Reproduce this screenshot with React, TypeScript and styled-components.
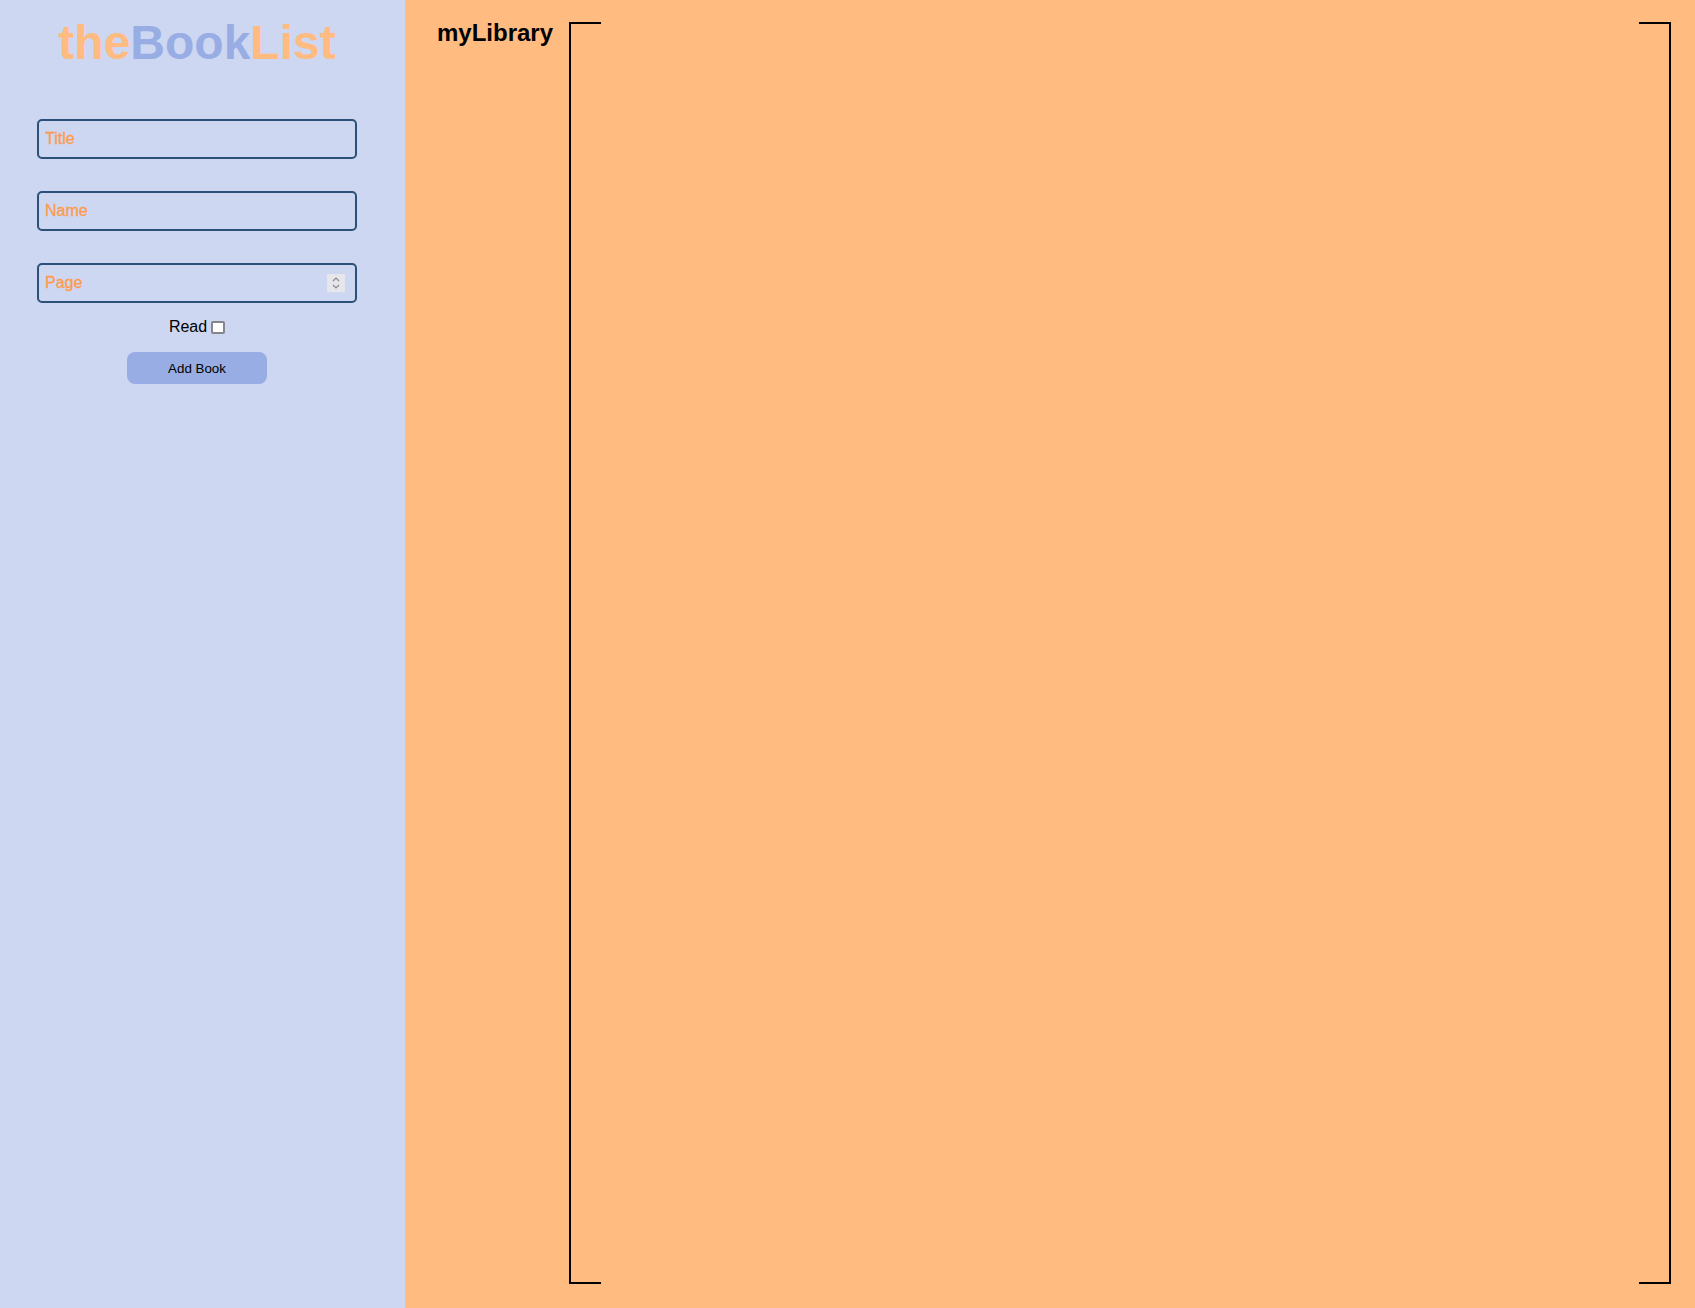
import React from "react";
import styled, { createGlobalStyle } from "styled-components";

const GlobalStyle = createGlobalStyle`
  html, body {
    margin: 0;
    padding: 0;
  }
  body {
    font-family: "Liberation Sans", Arial, Helvetica, sans-serif;
    background: #ffbb80;
  }
  * { box-sizing: border-box; }
`;

const Page = styled.div`
  display: flex;
  min-height: 100vh;
  height: 1308px;
`;

const Sidebar = styled.aside`
  width: 405px;
  flex: 0 0 405px;
  background: #cdd7f1;
  padding-right: 11px;
  display: flex;
  flex-direction: column;
  align-items: center;
`;

const Logo = styled.h1`
  margin: 15px 0 0;
  font-size: 48px;
  line-height: 55px;
  font-weight: 700;
  text-align: center;
`;

const LogoPart = styled.span<{ $tone: "orange" | "blue" }>`
  color: ${(p) => (p.$tone === "orange" ? "#ffbb80" : "#97ade3")};
`;

const Form = styled.form`
  margin-top: 49px;
  display: flex;
  flex-direction: column;
  align-items: center;
  gap: 32px;
`;

const Field = styled.div`
  position: relative;
  width: 320px;
  height: 40px;
`;

const Input = styled.input`
  width: 100%;
  height: 100%;
  border: 2px solid #2d5078;
  border-radius: 5px;
  background: transparent;
  padding: 0 6px;
  font-family: "Liberation Sans", Arial, sans-serif;
  font-size: 16px;
  color: #222;
  outline: none;
  -moz-appearance: textfield;
  &::placeholder {
    color: #fe9a4b;
    opacity: 1;
    -webkit-text-stroke: 0.3px #fe9a4b;
  }
  &::-webkit-inner-spin-button,
  &::-webkit-outer-spin-button {
    -webkit-appearance: none;
    margin: 0;
  }
`;

const Spinner = styled.span`
  position: absolute;
  right: 12px;
  top: 11px;
  width: 18px;
  height: 18px;
  background: #e7e7eb;
  display: flex;
  align-items: center;
  justify-content: center;
  pointer-events: none;
`;

const ReadRow = styled.label`
  margin-top: -17px;
  display: flex;
  align-items: center;
  gap: 4px;
  font-size: 16px;
  line-height: 18px;
  color: #000;
`;

const Check = styled.input`
  appearance: none;
  -webkit-appearance: none;
  width: 14px;
  height: 13px;
  margin: 1px 0 0;
  border: 2px solid #85858c;
  border-radius: 2px;
  background: #fff;
`;

const AddButton = styled.button`
  margin-top: -16px;
  width: 140px;
  height: 32px;
  border: none;
  border-radius: 8px;
  background: #97ade3;
  color: #000;
  font-family: "Liberation Sans", Arial, sans-serif;
  font-size: 13.33px;
  cursor: pointer;
`;

const Main = styled.main`
  flex: 1;
  display: flex;
  align-items: stretch;
  gap: 16px;
  padding: 20px 24px 24px 32px;
  background: #ffbb80;
`;

const Heading = styled.h2`
  margin: 0;
  font-size: 24px;
  line-height: 26px;
  font-weight: 700;
  color: #000;
`;

const Library = styled.section`
  flex: 1;
  margin-top: 2px;
  border-left: 2px solid #000;
  border-right: 2px solid #000;
  background-image: linear-gradient(#000, #000), linear-gradient(#000, #000),
    linear-gradient(#000, #000), linear-gradient(#000, #000);
  background-size: 32px 2px;
  background-repeat: no-repeat;
  background-origin: border-box;
  background-position: left top, right top, left bottom, right bottom;
`;

export default function App() {
  return (
    <>
      <GlobalStyle />
      <Page>
        <Sidebar>
          <Logo>
            <LogoPart $tone="orange">the</LogoPart>
            <LogoPart $tone="blue">Book</LogoPart>
            <LogoPart $tone="orange">List</LogoPart>
          </Logo>
          <Form onSubmit={(e) => e.preventDefault()}>
            <Field>
              <Input type="text" placeholder="Title" />
            </Field>
            <Field>
              <Input type="text" placeholder="Name" />
            </Field>
            <Field>
              <Input type="number" placeholder="Page" />
              <Spinner>
                <svg width="10" height="14" viewBox="0 0 10 14" fill="none">
                  <path d="M2 5 L5 2 L8 5" stroke="#8a8a8f" strokeWidth="1.2" />
                  <path d="M2 9 L5 12 L8 9" stroke="#8a8a8f" strokeWidth="1.2" />
                </svg>
              </Spinner>
            </Field>
            <ReadRow>
              Read
              <Check type="checkbox" />
            </ReadRow>
            <AddButton type="submit">Add Book</AddButton>
          </Form>
        </Sidebar>
        <Main>
          <Heading>myLibrary</Heading>
          <Library />
        </Main>
      </Page>
    </>
  );
}
